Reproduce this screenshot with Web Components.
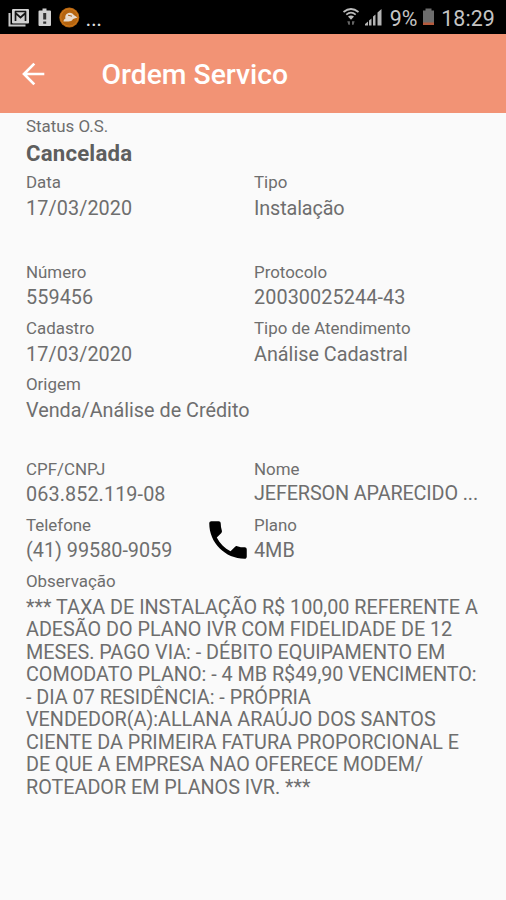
<!DOCTYPE html>
<html lang="pt-BR">
<head>
<meta charset="utf-8">
<title>Ordem Servico</title>
<style>
html, body { margin: 0; height: 100%; background: #fafafa; font-family: Roboto, sans-serif; }
</style>
</head>
<body>
<order-screen></order-screen>
<script>
const define = (name, html) => customElements.define(name, class extends HTMLElement {
  constructor() {
    super();
    const t = document.createElement('template');
    t.innerHTML = html;
    this.attachShadow({ mode: 'open' }).appendChild(t.content.cloneNode(true));
  }
});

define('status-bar', `
<style>
:host { display: flex; align-items: center; justify-content: space-between; height: 34px; background: #000; color: #c4c4c4; padding: 0 11px 0 8px; box-sizing: border-box; font-size: 21.400px; line-height: 34px; }
div { display: flex; align-items: center; }
svg { display: block; flex: none; }
.dots { margin-left: 3.500px; letter-spacing: -.4px; color: #ddd; padding-top: 3px; font-size: 22px; }
.pct { padding-top: 3px; margin-left: 6px; letter-spacing: -.1px; }
.time { padding-top: 3px; margin-left: 6px; letter-spacing: .1px; }
</style>
<div>
  <svg width="74" height="34" viewBox="0 0 74 34">
    <path d="M1.500 13v12.500h16" fill="none" stroke="#c9c9c9" stroke-width="2"/>
    <rect x="4" y="9" width="17" height="14.500" rx="1" fill="#d2d2d2"/>
    <path d="M7.500 21V13l5 4.500 5-4.500v8M7 11.500h11" fill="none" stroke="#161616" stroke-width="1.700"/>
    <path d="M32 10.500h2.500v-2h4v2H42a1 1 0 0 1 1 1V25a1 1 0 0 1-1 1H31.500a1 1 0 0 1-1-1V11.500a1 1 0 0 1 1-1z" fill="#d0d0d0"/>
    <path d="M35.200 13h3v6.500h-3zM35.200 21.500h3v2.200h-3z" fill="#333"/>
    <circle cx="61.300" cy="17.500" r="10" fill="#b5640f"/>
    <circle cx="61.300" cy="17.500" r="8.600" fill="none" stroke="#d07a1c"/>
    <path d="M55.500 21.500c0-1.500.8-2.500 2-3-.8-2.500.8-5.500 4-5.700 2.500 0 3.500 1 4 2l4 2.700-4.500 1.500c-1 1.800-2.500 2.500-4.500 2.500z" fill="#e8dccf"/>
    <path d="M60 15.200l4 1" stroke="#a85c14" stroke-width="1"/>
  </svg>
  <span class="dots">...</span>
</div>
<div>
  <svg width="42" height="34" viewBox="342 0 42 34">
    <g fill="none" stroke="#bcbcbc" stroke-width="1.700">
      <path d="M343.500 12q7.500-6 15 0"/><path d="M346.300 14.600q4.700-4 9.400 0"/>
    </g>
    <path d="M348 16.500q3-2 6 0l-3 3.300z" fill="#bcbcbc"/>
    <path d="M347.300 21.300h2.600v3.400h-1.500zM352 21.300h2.600l-1 3.400H352z" fill="#666"/>
    <path d="M365 25.500v-1.500l3-2.500v4zM369 20.500l2.500-2v7H369zM373 16.500l2.500-2v11H373zM377.500 12.500l4-3.500v16.500h-4z" fill="#b4b4b4"/>
  </svg>
  <span class="pct">9%</span>
  <svg width="13" height="34" viewBox="0 0 13 34" style="margin-left:5px"><path d="M1 10.500h2.500v-2h6v2H12V25H1z" fill="#6d6d6d"/><path d="M1 22.500h11V25H1z" fill="#b65a3c"/></svg>
  <span class="time">18:29</span>
</div>`);

define('app-bar', `
<style>
:host { display: flex; align-items: center; height: 79px; background: #f29375; color: #fff; box-sizing: border-box; padding-left: 22px; }
.title { margin-left: 56.500px; font-size: 28.300px; font-weight: 500; line-height: 32px; padding-top: 2px; }
svg { display: block; }
</style>
<svg width="23" height="24" viewBox="0 0 23 24"><path d="M22.300 12H2M12.300 1.600 2 12l10.300 10.400" fill="none" stroke="#fff" stroke-width="2.700"/></svg>
<span class="title"><slot></slot></span>`);

define('data-field', `
<style>
:host { display: block; min-width: 0; padding-bottom: 8px; color: #6e6e6e; }
.label { font-size: 16.900px; line-height: 20px; white-space: nowrap; }
.value { margin-top: 5.500px; font-size: 19.800px; line-height: 22.500px; white-space: nowrap; }
:host([numeric]) .value { letter-spacing: .1px; }
:host([tight]) .value { letter-spacing: -.12px; }
:host([raised]) .value { margin-top: 4.700px; }
:host([strong]) .value { font-weight: 700; color: #5e5e5e; font-size: 22.200px; letter-spacing: .2px; }
:host([long]) .value { white-space: normal; letter-spacing: -.02px; }
</style>
<div class="label"><slot name="label"></slot></div>
<div class="value"><slot></slot></div>`);

define('field-row', `
<style>
:host { display: grid; grid-template-columns: 228px 228px; height: 56.200px; }
:host([wide]) { grid-template-columns: 456px; }
:host([after]) { margin-bottom: var(--after, 33.600px); }
</style><slot></slot>`);

define('call-button', `
<style>:host { display: block; width: 50px; height: 50px; } svg { display: block; }</style>
<svg width="50" height="50" viewBox="0 0 24 24"><path d="M6.620 10.790c1.440 2.830 3.760 5.140 6.590 6.590l2.200-2.200c.27-.27.67-.36 1.020-.24 1.120.37 2.330.57 3.570.57.550 0 1 .45 1 1V20c0 .55-.45 1-1 1-9.390 0-17-7.610-17-17 0-.55.45-1 1-1h3.500c.55 0 1 .45 1 1 0 1.250.2 2.450.57 3.570.11.35.03.74-.25 1.020l-2.200 2.200z"/></svg>`);

define('phone-cell', `
<style>
:host { display: block; position: relative; }
call-button { position: absolute; left: 176.500px; top: 0; }
</style><slot></slot><call-button></call-button>`);

define('order-screen', `
<style>
:host { display: block; width: 506px; height: 900px; overflow: hidden; background: #fafafa; }
main { padding: 3px 0 0 26px; }
</style>
<status-bar></status-bar>
<app-bar>Ordem Servico</app-bar>
<main>
  <field-row wide><data-field strong><span slot="label">Status O.S.</span>Cancelada</data-field></field-row>
  <field-row after>
    <data-field numeric><span slot="label">Data</span>17/03/2020</data-field>
    <data-field tight><span slot="label">Tipo</span>Instalação</data-field>
  </field-row>
  <field-row>
    <data-field numeric><span slot="label">Número</span>559456</data-field>
    <data-field numeric><span slot="label">Protocolo</span>20030025244-43</data-field>
  </field-row>
  <field-row>
    <data-field numeric><span slot="label">Cadastro</span>17/03/2020</data-field>
    <data-field><span slot="label">Tipo de Atendimento</span>Análise Cadastral</data-field>
  </field-row>
  <field-row wide after style="--after:28.200px"><data-field><span slot="label">Origem</span>Venda/Análise de Crédito</data-field></field-row>
  <field-row>
    <data-field numeric><span slot="label">CPF/CNPJ</span>063.852.119-08</data-field>
    <data-field tight raised><span slot="label">Nome</span>JEFERSON APARECIDO ...</data-field>
  </field-row>
  <field-row>
    <phone-cell><data-field><span slot="label">Telefone</span>(41) 99580-9059</data-field></phone-cell>
    <data-field><span slot="label">Plano</span>4MB</data-field>
  </field-row>
  <data-field long><span slot="label">Observação</span>*** TAXA DE INSTALAÇÃO R$ 100,00 REFERENTE A<br>ADESÃO DO PLANO IVR COM FIDELIDADE DE 12<br>MESES. PAGO VIA: - DÉBITO EQUIPAMENTO EM<br>COMODATO PLANO: - 4 MB R$49,90 VENCIMENTO:<br>- DIA 07 RESIDÊNCIA: - PRÓPRIA<br>VENDEDOR(A):ALLANA ARAÚJO DOS SANTOS<br>CIENTE DA PRIMEIRA FATURA PROPORCIONAL E<br>DE QUE A EMPRESA NAO OFERECE MODEM/<br>ROTEADOR EM PLANOS IVR. ***</data-field>
</main>`);
</script>
</body>
</html>
